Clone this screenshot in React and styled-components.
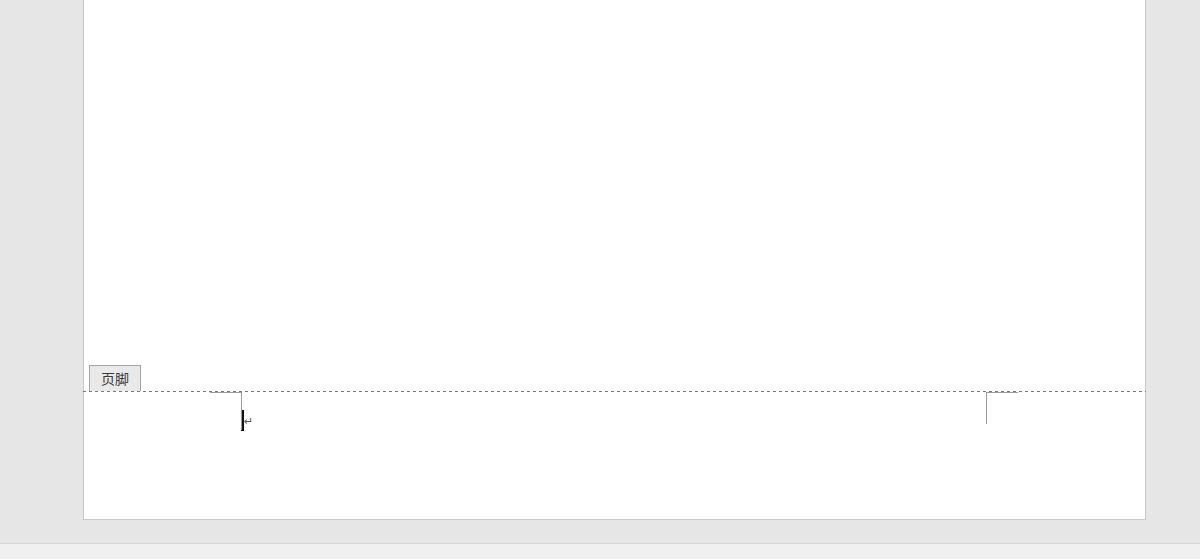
import React from 'react';
import styled, { createGlobalStyle } from 'styled-components';

const Global = createGlobalStyle`
  *, *::before, *::after {
    box-sizing: border-box;
  }
  html, body {
    margin: 0;
    padding: 0;
    background: #e6e6e6;
    font-family: "Noto Sans CJK SC", "Liberation Sans", sans-serif;
  }
`;

const Window = styled.div`
  width: 1200px;
  height: 559px;
  display: flex;
  flex-direction: column;
  overflow: hidden;
  background: #e6e6e6;
`;

const Workspace = styled.div`
  flex: 1;
  padding-left: 83px;
`;

const Page = styled.div`
  width: 1063px;
  height: 520px;
  background: #fff;
  border: 1px solid #c9c9c9;
  border-top: none;
  display: flex;
  flex-direction: column;
`;

const Body = styled.div`
  flex: 1;
  position: relative;
`;

const Tag = styled.div`
  position: absolute;
  left: 5px;
  bottom: 0;
  width: 52px;
  height: 26px;
  border: 1px solid #a6a6a6;
  border-bottom: none;
  background: #e9e9e9;
  color: #3a3a3a;
  font-size: 14px;
  line-height: 24px;
  text-align: center;
`;

const Footer = styled.div`
  height: 128px;
  position: relative;
  margin-left: -1px;
  margin-right: -1px;
  background-image: repeating-linear-gradient(90deg, #7a7a7a 0 3px, transparent 3px 6px);
  background-size: 100% 1px;
  background-repeat: no-repeat;
  padding-left: 159px;
  padding-top: 19px;
`;

const Corner = styled.div`
  position: absolute;
  top: 1px;
  width: 32px;
  height: ${p => p.$h}px;
  border-top: 1px solid #9a9a9a;
  ${p => (p.$side === 'left'
    ? 'left: 127px; border-right: 1px solid #9a9a9a;'
    : 'left: 903px; border-left: 1px solid #9a9a9a;')}
`;

const Line = styled.div`
  display: flex;
  align-items: center;
  height: 21px;
`;

const Caret = styled.span`
  width: 3px;
  height: 21px;
  background: #111;
  margin-left: -1px;
`;

const Mark = styled.span`
  font-family: "DejaVu Sans", sans-serif;
  font-size: 11px;
  color: #555;
  margin-top: 1px;
`;

const StatusBar = styled.div`
  height: 16px;
  border-top: 1px solid #d3d3d3;
  background: #f0f0f0;
`;

export default function App() {
  return (
    <Window>
      <Global />
      <Workspace>
        <Page>
          <Body>
            <Tag>页脚</Tag>
          </Body>
          <Footer>
            <Corner $side="left" $h={38} />
            <Corner $side="right" $h={32} />
            <Line>
              <Caret />
              <Mark>↵</Mark>
            </Line>
          </Footer>
        </Page>
      </Workspace>
      <StatusBar />
    </Window>
  );
}
